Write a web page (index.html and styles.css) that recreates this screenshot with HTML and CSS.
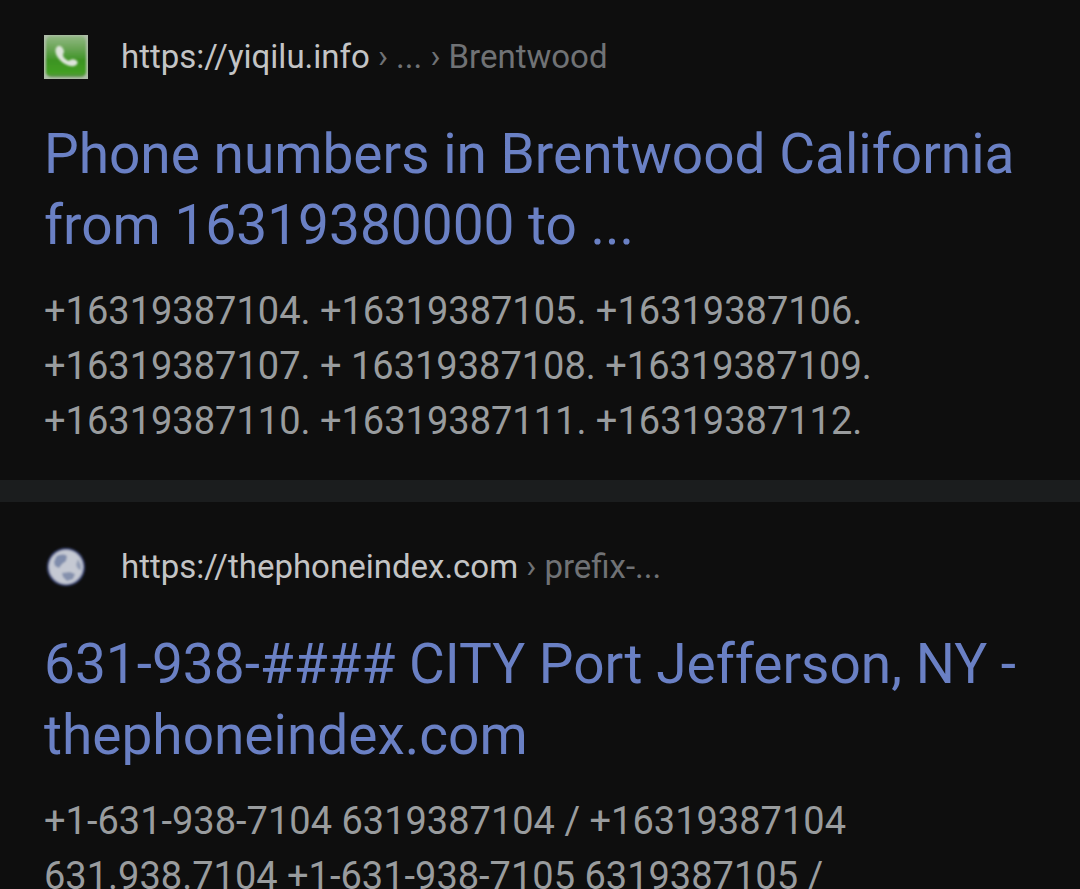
FILE: index.html
```html
<!DOCTYPE html>
<html lang="en">
<head>
<meta charset="utf-8">
<title>Search results</title>
<link rel="stylesheet" href="styles.css">
</head>
<body>
<main class="results">
  <article class="result">
    <a class="link" href="#">
      <div class="source">
        <svg class="favicon" viewBox="0 0 44 44" aria-hidden="true">
          <defs>
            <linearGradient id="green" x1="0" y1="0" x2="0" y2="1">
              <stop offset="0" stop-color="#91b883"/>
              <stop offset="0.3" stop-color="#6aa556"/>
              <stop offset="0.6" stop-color="#3c9323"/>
              <stop offset="0.9" stop-color="#43a022"/>
              <stop offset="1" stop-color="#5f8f4e"/>
            </linearGradient>
            <filter id="soft" x="-20%" y="-20%" width="140%" height="140%"><feGaussianBlur stdDeviation="0.9"/></filter>
          </defs>
          <rect width="44" height="44" fill="#afbda9"/>
          <rect x="2" y="1" width="40" height="41" rx="5" fill="url(#green)" filter="url(#soft)"/>
          <path d="M14 11c-4 2-3 8 1 13 4 5 11 8 15 7 4-1 4-4 3-5-2-2-5-2-7-1-1 1-2 1-3 0-2-1-4-3-4-5 0-2 1-2 1-4-1-3-3-6-6-5z" fill="#dde4da" filter="url(#soft)"/>
        </svg>
        <cite class="url">https://yiqilu.info<span class="path"> › ... › Brentwood</span></cite>
      </div>
      <h3 class="title">Phone numbers in Brentwood California from 16319380000 to ...</h3>
    </a>
    <p class="snippet">+16319387104. +16319387105. +16319387106. +16319387107. + 16319387108. +16319387109. +16319387110. +16319387111. +16319387112.</p>
  </article>
  <article class="result">
    <a class="link" href="#">
      <div class="source">
        <svg class="favicon" viewBox="0 0 44 44" aria-hidden="true">
          <defs>
            <filter id="haze" x="-20%" y="-20%" width="140%" height="140%"><feGaussianBlur stdDeviation="1.3"/></filter>
          </defs>
          <g filter="url(#haze)">
            <circle cx="22" cy="22" r="19" fill="#4a5688"/>
            <circle cx="22" cy="22" r="17" fill="#c5c9d3"/>
            <path d="M12 12c3-3 8-3 11-1l-1 5-4 3-3 4-4-2-1-4z" fill="#7f8cab"/>
            <path d="M18 28l8-1 5 2-2 5-6 2-4-4z" fill="#8591ad"/>
            <path d="M34 14l3 6v5l-3-1-2-4z" fill="#929cb4"/>
          </g>
        </svg>
        <cite class="url">https://thephoneindex.com<span class="path"> › prefix-...</span></cite>
      </div>
      <h3 class="title">631-938-#### CITY Port Jefferson, NY - thephoneindex.com</h3>
    </a>
    <p class="snippet">+1-631-938-7104 6319387104 / +16319387104 631.938.7104 +1-631-938-7105 6319387105 /</p>
  </article>
</main>
</body>
</html>
```
FILE: styles.css
```css
* { box-sizing: border-box; }
body { margin: 0; background: #0e0e0e; font-family: Roboto, "Liberation Sans", sans-serif; }
.results { display: flex; flex-direction: column; }
.result { padding: 33px 44px 31px; }
.result + .result { padding-top: 41px; padding-bottom: 0; border-top: 22px solid #1b1d1e; }
.link { display: block; color: inherit; text-decoration: none; }
.source { display: flex; align-items: center; gap: 33px; height: 48px; }
.favicon { width: 44px; height: 44px; flex: none; }
.url { color: #c3c4c5; font-size: 33px; line-height: 44px; font-style: normal; white-space: nowrap; }
.path { color: #707275; }
.title { margin: 38px 0 0; color: #6a80c4; font-size: 55px; line-height: 71px; font-weight: 400; }
.snippet { margin: 23px 0 0; color: #999c9e; font-size: 38px; line-height: 55px; }
```
